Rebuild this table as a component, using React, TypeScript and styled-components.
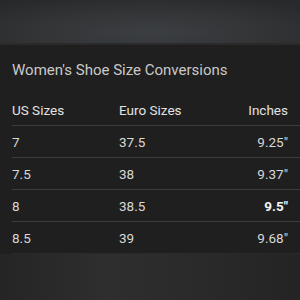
import React from "react";
import styled, { createGlobalStyle } from "styled-components";

const Global = createGlobalStyle`
  html, body { margin: 0; padding: 0; background: #262626; }
  body { width: 300px; height: 300px; overflow: hidden; font-family: Roboto, "Open Sans", sans-serif; }
`;

const Page = styled.div`
  width: 300px;
  height: 300px;
  display: flex;
  flex-direction: column;
  background: #272727;
`;

const TopShade = styled.div`
  height: 43px;
  background: radial-gradient(ellipse 70% 90% at 50% 75%, #3c3f42 0%, #323436 55%, #28292a 100%);
  border-bottom: 2px solid #2a2a2a;
`;

const Panel = styled.div`
  background: #1f1f1f;
  padding: 0 0 0 12px;
  display: flex;
  flex-direction: column;
`;

const Title = styled.div`
  color: #c9c9c9;
  font-size: 15px;
  line-height: 20px;
  padding: 15px 0 14px;
`;

const Row = styled.div<{ $head?: boolean; $last?: boolean }>`
  display: grid;
  grid-template-columns: 107px 1fr auto;
  align-items: center;
  height: 31px;
  padding-right: 12px;
  border-bottom: 1px solid ${(p) => (p.$last ? "#2a2a2a" : "#3b3b3b")};
  color: ${(p) => (p.$head ? "#e2e2e2" : "#d8d8d8")};
  font-size: 13.5px;
`;

const Cell = styled.span<{ $right?: boolean; $bold?: boolean }>`
  text-align: ${(p) => (p.$right ? "right" : "left")};
  font-weight: ${(p) => (p.$bold ? 700 : 400)};
  color: ${(p) => (p.$bold ? "#f4f4f4" : "inherit")};
`;

const Bottom = styled.div`
  flex: 1;
  background: linear-gradient(90deg, #252525 0%, #2e2e2e 35%, #2b2b2b 60%, #242424 100%);
`;

const rows = [
  ["7", "37.5", "9.25\""],
  ["7.5", "38", "9.37\""],
  ["8", "38.5", "9.5\""],
  ["8.5", "39", "9.68\""],
];

export default function App() {
  return (
    <Page>
      <Global />
      <TopShade />
      <Panel>
        <Title>Women's Shoe Size Conversions</Title>
        <Row $head>
          <Cell>US Sizes</Cell>
          <Cell>Euro Sizes</Cell>
          <Cell $right>Inches</Cell>
        </Row>
        {rows.map((r, i) => (
          <Row key={r[0]} $last={i === rows.length - 1}>
            <Cell>{r[0]}</Cell>
            <Cell>{r[1]}</Cell>
            <Cell $right $bold={r[0] === "8"}>{r[2]}</Cell>
          </Row>
        ))}
      </Panel>
      <Bottom />
    </Page>
  );
}
